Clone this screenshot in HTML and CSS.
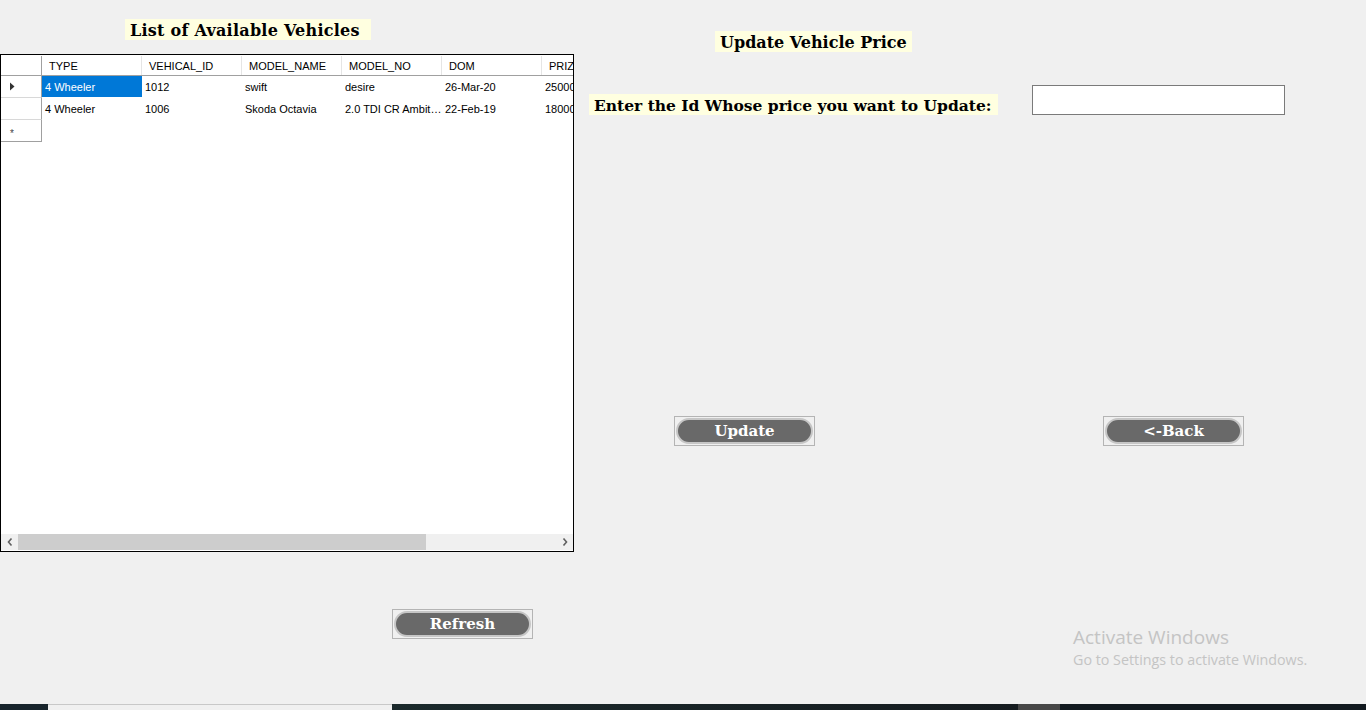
FILE: index.html
```html
<!DOCTYPE html>
<html>
<head>
<meta charset="utf-8">
<link rel="stylesheet" href="styles.css">
</head>
<body>
<div class="form">
  <div class="left">
    <div class="title-row"><span class="label title-left">List of Available Vehicles</span></div>
    <div class="grid">
      <div class="grid-body">
        <div class="grow header">
          <div class="rh"></div>
          <div class="hc">TYPE</div>
          <div class="hc">VEHICAL_ID</div>
          <div class="hc">MODEL_NAME</div>
          <div class="hc">MODEL_NO</div>
          <div class="hc">DOM</div>
          <div class="hc">PRIZE</div>
        </div>
        <div class="grow">
          <div class="rh"><svg width="6" height="9" viewBox="0 0 6 9"><path d="M1 0.5 L5.5 4.5 L1 8.5 Z" fill="#333"/></svg></div>
          <div class="dc sel">4 Wheeler</div>
          <div class="dc">1012</div>
          <div class="dc">swift</div>
          <div class="dc">desire</div>
          <div class="dc">26-Mar-20</div>
          <div class="dc">250000</div>
        </div>
        <div class="grow">
          <div class="rh"></div>
          <div class="dc">4 Wheeler</div>
          <div class="dc">1006</div>
          <div class="dc">Skoda Octavia</div>
          <div class="dc">2.0 TDI CR Ambit…</div>
          <div class="dc">22-Feb-19</div>
          <div class="dc">180000</div>
        </div>
        <div class="grow newrow">
          <div class="rh"><span class="star">*</span></div>
        </div>
      </div>
      <div class="hscroll">
        <div class="arrow"><svg width="6" height="8" viewBox="0 0 6 8"><path d="M4.5 0.5 L1.5 4 L4.5 7.5" stroke="#606060" stroke-width="1.6" fill="none"/></svg></div>
        <div class="track"><div class="thumb"></div></div>
        <div class="arrow"><svg width="6" height="8" viewBox="0 0 6 8"><path d="M1.5 0.5 L4.5 4 L1.5 7.5" stroke="#606060" stroke-width="1.6" fill="none"/></svg></div>
      </div>
    </div>
    <div class="refresh-row">
      <button class="btn"><span class="pill">Refresh</span></button>
    </div>
  </div>
  <div class="right">
    <div class="title-row2"><span class="label">Update Vehicle Price</span></div>
    <div class="enter-row">
      <span class="label enter">Enter the Id Whose price you want to Update:</span>
      <input class="idbox" type="text">
    </div>
    <div class="btn-row">
      <button class="btn"><span class="pill">Update</span></button>
      <button class="btn"><span class="pill">&lt;-Back</span></button>
    </div>
    <div class="activate">
      <div class="a1">Activate Windows</div>
      <div class="a2">Go to Settings to activate Windows.</div>
    </div>
  </div>
</div>
<div class="taskbar">
  <div class="tb-a"></div>
  <div class="tb-b"></div>
  <div class="tb-c"></div>
  <div class="tb-d"></div>
  <div class="tb-e"></div>
</div>
</body>
</html>
```

FILE: styles.css
```css
* { box-sizing: border-box; }
html, body { margin: 0; padding: 0; }
body {
  width: 1366px;
  height: 710px;
  background: #f0f0f0;
  overflow: hidden;
  font-family: "Liberation Sans", Arial, sans-serif;
}
.form {
  display: flex;
  height: 704px;
}
.left {
  width: 574px;
  display: flex;
  flex-direction: column;
}
.label {
  display: inline-block;
  background: #ffffe0;
  font-family: "DejaVu Serif", serif;
  font-weight: bold;
  font-size: 16px;
  line-height: 22px;
  height: 21px;
  padding: 1px 5px 0;
  color: #000;
  white-space: nowrap;
  overflow: hidden;
}
.title-row {
  padding: 19px 0 0 125px;
  height: 54px;
}
.title-left { width: 246px; letter-spacing: 0.25px; }
.grid {
  width: 574px;
  height: 498px;
  border: 1px solid #000;
  background: #fff;
  display: flex;
  flex-direction: column;
  overflow: hidden;
}
.grid-body { flex: 1; overflow: hidden; }
.grow {
  display: flex;
  height: 22px;
  font-size: 11px;
  color: #000;
}
.grow.header { height: 21px; border-bottom: 1px solid #a0a0a0; padding-top: 1px; }
.rh {
  width: 41px;
  flex: none;
  border-right: 1px solid #a0a0a0;
  border-bottom: 1px solid #d8d8d8;
  display: flex;
  align-items: center;
  padding-left: 8px;
}
.header .rh { border-bottom: none; }
.newrow .rh { border-bottom: 1px solid #a0a0a0; }
.star { font-size: 10px; color: #444; line-height: 1; margin-top: 6px; margin-left: 1px; }
.hc {
  width: 100px;
  flex: none;
  padding-left: 7px;
  display: flex;
  align-items: center;
  border-right: 1px solid #e5e5e5;
  white-space: nowrap;
}
.dc {
  width: 100px;
  flex: none;
  padding-left: 3px;
  display: flex;
  align-items: center;
  white-space: nowrap;
  overflow: hidden;
  height: 21px;
}
.dc.sel { background: #0078d7; color: #fff; }
.hscroll {
  height: 16px;
  display: flex;
  background: #f0f0f0;
  margin-bottom: 1px;
}
.arrow {
  width: 17px;
  display: flex;
  align-items: center;
  justify-content: center;
}
.track { flex: 1; display: flex; }
.thumb { width: 408px; background: #cdcdcd; }
.refresh-row {
  padding: 57px 0 0 392px;
}
.btn {
  width: 141px;
  height: 30px;
  border: 1px solid #b4b4b4;
  background: #f0f0f0;
  padding: 1px 1px;
  margin: 0;
  display: flex;
}
.pill {
  flex: 1;
  border-radius: 14px;
  background: #696969;
  border: 2px solid #c6c6c6;
  color: #fff;
  font-family: "DejaVu Serif", serif;
  font-weight: bold;
  font-size: 15px;
  display: flex;
  align-items: center;
  justify-content: center;
}
.right {
  flex: 1;
  display: flex;
  flex-direction: column;
}
.title-row2 {
  padding: 31px 0 0 141px;
  height: 52px;
}
.enter-row {
  display: flex;
  align-items: flex-start;
  padding-left: 15px;
  padding-top: 33px;
}
.label.enter { margin-top: 9px; width: 409px; font-size: 15.5px; }
.idbox {
  margin-left: 34px;
  width: 253px;
  height: 30px;
  border: 1px solid #7a7a7a;
  background: #fff;
  outline: none;
}
.btn-row {
  display: flex;
  gap: 288px;
  padding: 301px 0 0 100px;
}
.activate {
  padding: 179px 0 0 499px;
  font-family: "Open Sans", "Noto Sans", sans-serif;
  color: #c4c4c4;
}
.a1 { font-size: 19px; line-height: 24px; }
.a2 { font-size: 14.3px; line-height: 22px; }
.taskbar {
  display: flex;
  height: 6px;
}
.tb-a { width: 48px; background: #18242c; }
.tb-b { width: 344px; background: #f0f0f0; border-top: 1px solid #c8c8c8; }
.tb-c { width: 626px; background: linear-gradient(90deg, #1b2a2c, #161c20); }
.tb-d { width: 42px; background: #474747; }
.tb-e { flex: 1; background: #121a20; }
```
